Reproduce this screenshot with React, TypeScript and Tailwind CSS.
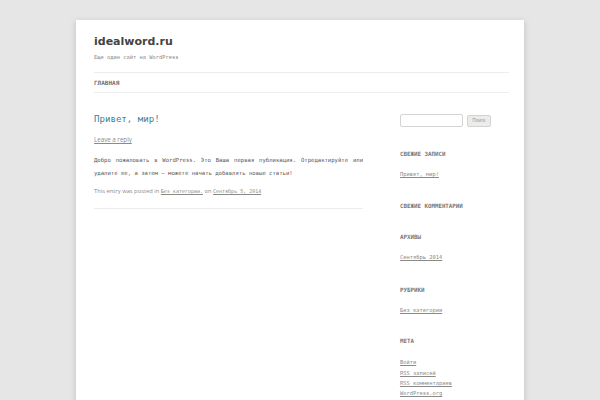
const mono = "font-['DejaVu_Sans_Mono','Liberation_Mono',monospace]";
const sans = "font-['Open_Sans','DejaVu_Sans',sans-serif]";

function WidgetTitle({ children }: { children: string }) {
  return (
    <h3 className={`${mono} text-[5.8px] leading-[10px] font-bold uppercase text-[#777]`}>
      {children}
    </h3>
  );
}

function WidgetLink({ children }: { children: string }) {
  return (
    <a href="#" className={`${mono} block text-[5.4px] leading-[10.4px] text-[#8a8a8a] underline`}>
      {children}
    </a>
  );
}

export default function App() {
  return (
    <div className="min-h-screen bg-[#e6e6e6] pt-[20px]">
      <div className="mx-auto min-h-[400px] w-[448px] bg-white pl-[18px] pr-[15px] pt-[14px] shadow-[0_2px_6px_rgba(100,100,100,0.3)]">
        {/* header */}
        <header>
          <h1 className="font-['DejaVu_Sans',sans-serif] text-[11px] leading-[16px] font-bold text-[#444]">
            idealword.ru
          </h1>
          <p className={`${mono} mt-[2px] text-[5.4px] leading-[10px] text-[#8a8a8a]`}>
            Еще один сайт на WordPress
          </p>
          <nav className="mt-[10px] flex h-[21px] items-center border-y border-[#ededed]">
            <a href="#" className={`${mono} text-[6px] font-bold uppercase text-[#707070]`}>
              Главная
            </a>
          </nav>
        </header>

        <div className="flex gap-[37px]">
          {/* content */}
          <main className="w-[265px]">
            <article className="mr-[-4px] border-b border-[#ededed] pb-[12px]">
              <h2 className={`${mono} mt-[20px] text-[9.1px] leading-[12px] text-[#3a7f9c]`}>
                Привет, мир!
              </h2>
              <a href="#" className={`${sans} mt-[10px] block text-[6.2px] leading-[10px] text-[#8a8a8a] underline`}>
                Leave a reply
              </a>
              <p className={`${mono} mt-[9px] text-justify text-[5.6px] leading-[13px] text-[#5a5a5a]`}>
                Добро пожаловать в WordPress. Это Ваша первая публикация. Отредактируйте или
                удалите ее, а затем – можете начать добавлять новые статьи!
              </p>
              <p className={`${sans} mt-[6px] text-[5.8px] leading-[10px] text-[#8a8a8a]`}>
                This entry was posted in{" "}
                <a href="#" className={`${mono} text-[5px] underline`}>Без категории.</a> on{" "}
                <a href="#" className={`${mono} text-[5px] underline`}>Сентябрь 5, 2014</a>
              </p>
            </article>
          </main>

          {/* sidebar */}
          <aside className="flex-1 pl-[4px]">
            <form className="mt-[21px] flex items-center gap-[4px]">
              <input className="h-[13px] w-[63px] rounded-[2px] border border-[#d4d4d4] bg-white" />
              <button
                type="button"
                className={`${sans} h-[12px] w-[24px] rounded-[2px] border border-[#d2d2d2] bg-[#ececec] text-[4.5px] text-[#8c8c8c]`}
              >
                Поиск
              </button>
            </form>

            <section className="mt-[22px]">
              <WidgetTitle>Свежие записи</WidgetTitle>
              <div className="mt-[10px]">
                <WidgetLink>Привет, мир!</WidgetLink>
              </div>
            </section>

            <section className="mt-[22px]">
              <WidgetTitle>Свежие комментарии</WidgetTitle>
            </section>

            <section className="mt-[21px]">
              <WidgetTitle>Архивы</WidgetTitle>
              <div className="mt-[10px]">
                <WidgetLink>Сентябрь 2014</WidgetLink>
              </div>
            </section>

            <section className="mt-[22px]">
              <WidgetTitle>Рубрики</WidgetTitle>
              <div className="mt-[10px]">
                <WidgetLink>Без категории</WidgetLink>
              </div>
            </section>

            <section className="mt-[21px]">
              <WidgetTitle>Мета</WidgetTitle>
              <div className="mt-[11px]">
                <WidgetLink>Войти</WidgetLink>
                <WidgetLink>RSS записей</WidgetLink>
                <WidgetLink>RSS комментариев</WidgetLink>
                <WidgetLink>WordPress.org</WidgetLink>
              </div>
            </section>
          </aside>
        </div>
      </div>
    </div>
  );
}
